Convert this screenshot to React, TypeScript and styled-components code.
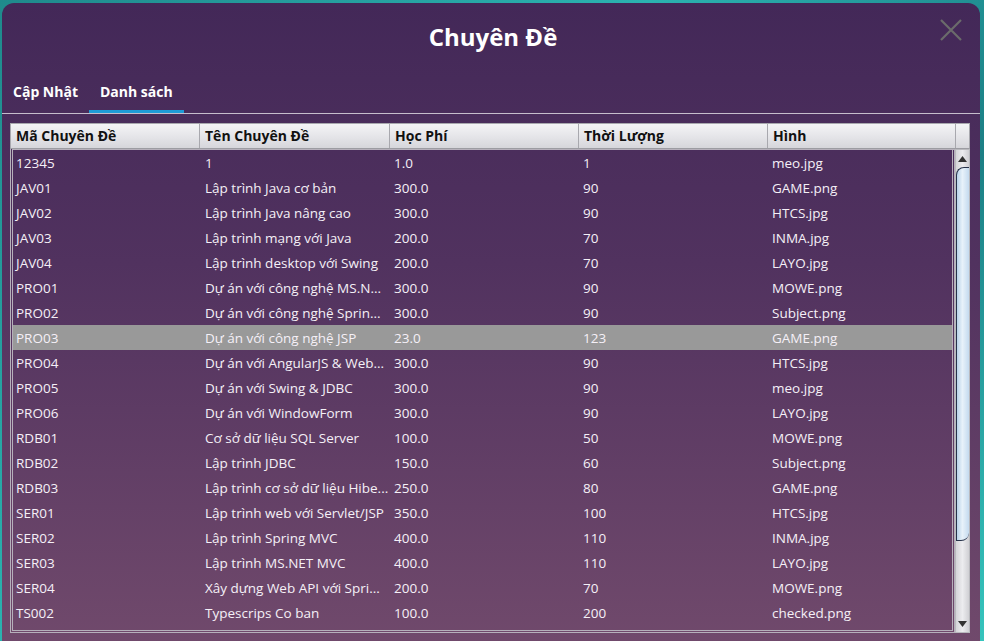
import React from "react";
import styled, { createGlobalStyle } from "styled-components";

const Global = createGlobalStyle`
  html, body { margin: 0; padding: 0; }
  body {
    width: 984px;
    height: 641px;
    overflow: hidden;
    background: linear-gradient(135deg, #1f8a8c 0%, #2bb3b0 40%, #1c7f85 70%, #36c4bd 100%);
    font-family: "Open Sans", "Noto Sans", sans-serif;
  }
`;

const Dialog = styled.div`
  margin: 3px 4px 0 2px;
  height: 650px;
  border-radius: 12px 12px 0 0;
  background: linear-gradient(180deg, #432858 0%, #51325f 40%, #714a6c 100%);
  display: flex;
  flex-direction: column;
  position: relative;
`;

const TitleBar = styled.div`
  height: 68px;
  display: flex;
  align-items: center;
  justify-content: center;
  padding-left: 4px;
`;

const Title = styled.h1`
  margin: 0 0 2px 0;
  font-size: 24px;
  font-weight: 700;
  color: #ffffff;
`;

const CloseButton = styled.div`
  position: absolute;
  top: 15px;
  right: 17px;
  width: 24px;
  height: 24px;
`;

const TabBar = styled.div`
  display: flex;
  height: 43px;
  box-sizing: border-box;
  align-items: stretch;
  border-bottom: 1px solid #c6bdcc;
`;

const Tab = styled.div<{ $active?: boolean }>`
  padding: 1px 11px 0 11px;
  display: flex;
  align-items: center;
  font-size: 14px;
  font-weight: 700;
  color: #ffffff;
  border-bottom: 3px solid ${(p) => (p.$active ? "#1e9bd7" : "transparent")};
`;

const TableArea = styled.div`
  margin: 9px 10px 0 8px;
  display: flex;
  flex-direction: column;
`;

const HeaderRow = styled.div`
  display: grid;
  grid-template-columns: 189px 190px 189px 189px 188px 1fr;
  height: 26px;
  border: 1px solid #a8a8ae;
  border-bottom-color: #9c9ca2;
  background: linear-gradient(180deg, #f4f4f6 0%, #e4e4e8 55%, #d6d6db 100%);
  box-sizing: border-box;
`;

const HeaderCell = styled.div`
  display: flex;
  align-items: center;
  padding: 0 0 2px 5px;
  font-size: 14px;
  font-weight: 700;
  color: #111;
  border-right: 1px solid #a8a8ae;
  box-sizing: border-box;
  &:last-child {
    border-right: none;
  }
`;

const BodyWrap = styled.div`
  display: flex;
  height: 484px;
`;

const Viewport = styled.div`
  flex: 1;
  border: 3px double #b6b0bb;
  border-top: 1px solid #b6b0bb;
  box-sizing: border-box;
  overflow: hidden;
`;

const Row = styled.div<{ $selected?: boolean }>`
  display: grid;
  grid-template-columns: 189px 189px 189px 189px 1fr;
  height: 25px;
  background: ${(p) => (p.$selected ? "#999999" : "transparent")};
`;

const Cell = styled.div`
  display: flex;
  align-items: center;
  padding-left: 3px;
  font-family: "Open Sans", "Noto Sans", sans-serif;
  font-size: 13.5px;
  color: #f5f0f7;
  white-space: nowrap;
  overflow: hidden;
`;

const ScrollBar = styled.div`
  width: 15px;
  display: flex;
  flex-direction: column;
  background: linear-gradient(90deg, #d4d4d8 0%, #ececef 50%, #d0d0d4 100%);
  border: 1px solid #b9b9be;
  box-sizing: border-box;
`;

const ScrollButton = styled.div`
  height: 17px;
  display: flex;
  align-items: center;
  justify-content: center;
`;

const Thumb = styled.div`
  height: 374px;
  border-radius: 8px 0 8px 0;
  border-top: 1px solid #26324a;
  border-left: 1px solid #26324a;
  border-bottom: 1px solid #26324a;
  background: linear-gradient(90deg, #b8d2e8 0%, #e8f2fa 45%, #c4daee 100%);
  box-sizing: border-box;
`;

const Track = styled.div`
  flex: 1;
`;

type R = [string, string, string, string, string];
const rows: R[] = [
  ["12345", "1", "1.0", "1", "meo.jpg"],
  ["JAV01", "Lập trình Java cơ bản", "300.0", "90", "GAME.png"],
  ["JAV02", "Lập trình Java nâng cao", "300.0", "90", "HTCS.jpg"],
  ["JAV03", "Lập trình mạng với Java", "200.0", "70", "INMA.jpg"],
  ["JAV04", "Lập trình desktop với Swing", "200.0", "70", "LAYO.jpg"],
  ["PRO01", "Dự án với công nghệ MS.N...", "300.0", "90", "MOWE.png"],
  ["PRO02", "Dự án với công nghệ Sprin...", "300.0", "90", "Subject.png"],
  ["PRO03", "Dự án với công nghệ JSP", "23.0", "123", "GAME.png"],
  ["PRO04", "Dự án với AngularJS & Web...", "300.0", "90", "HTCS.jpg"],
  ["PRO05", "Dự án với Swing & JDBC", "300.0", "90", "meo.jpg"],
  ["PRO06", "Dự án với WindowForm", "300.0", "90", "LAYO.jpg"],
  ["RDB01", "Cơ sở dữ liệu SQL Server", "100.0", "50", "MOWE.png"],
  ["RDB02", "Lập trình JDBC", "150.0", "60", "Subject.png"],
  ["RDB03", "Lập trình cơ sở dữ liệu Hibe...", "250.0", "80", "GAME.png"],
  ["SER01", "Lập trình web với Servlet/JSP", "350.0", "100", "HTCS.jpg"],
  ["SER02", "Lập trình Spring MVC", "400.0", "110", "INMA.jpg"],
  ["SER03", "Lập trình MS.NET MVC", "400.0", "110", "LAYO.jpg"],
  ["SER04", "Xây dựng Web API với Spri...", "200.0", "70", "MOWE.png"],
  ["TS002", "Typescrips Co ban", "100.0", "200", "checked.png"],
];

const headers = ["Mã Chuyên Đề", "Tên Chuyên Đề", "Học Phí", "Thời Lượng", "Hình", ""];

export default function App() {
  return (
    <>
      <Global />
      <Dialog>
        <TitleBar>
          <Title>Chuyên Đề</Title>
        </TitleBar>
        <CloseButton>
          <svg width="24" height="24" viewBox="0 0 24 24">
            <path d="M2 2 L22 22 M22 2 L2 22" stroke="#6b6b6b" strokeWidth="2.2" />
          </svg>
        </CloseButton>
        <TabBar>
          <Tab>Cập Nhật</Tab>
          <Tab $active>Danh sách</Tab>
        </TabBar>
        <TableArea>
          <HeaderRow>
            {headers.map((h, i) => (
              <HeaderCell key={i}>{h}</HeaderCell>
            ))}
          </HeaderRow>
          <BodyWrap>
            <Viewport>
              {rows.map((r, i) => (
                <Row key={i} $selected={r[0] === "PRO03"}>
                  {r.map((c, j) => (
                    <Cell key={j}>{c}</Cell>
                  ))}
                </Row>
              ))}
            </Viewport>
            <ScrollBar>
              <ScrollButton>
                <svg width="9" height="6" viewBox="0 0 9 6">
                  <path d="M0 6 L4.5 0 L9 6 Z" fill="#333" />
                </svg>
              </ScrollButton>
              <Thumb />
              <Track />
              <ScrollButton>
                <svg width="9" height="6" viewBox="0 0 9 6">
                  <path d="M0 0 L4.5 6 L9 0 Z" fill="#333" />
                </svg>
              </ScrollButton>
            </ScrollBar>
          </BodyWrap>
        </TableArea>
      </Dialog>
    </>
  );
}
